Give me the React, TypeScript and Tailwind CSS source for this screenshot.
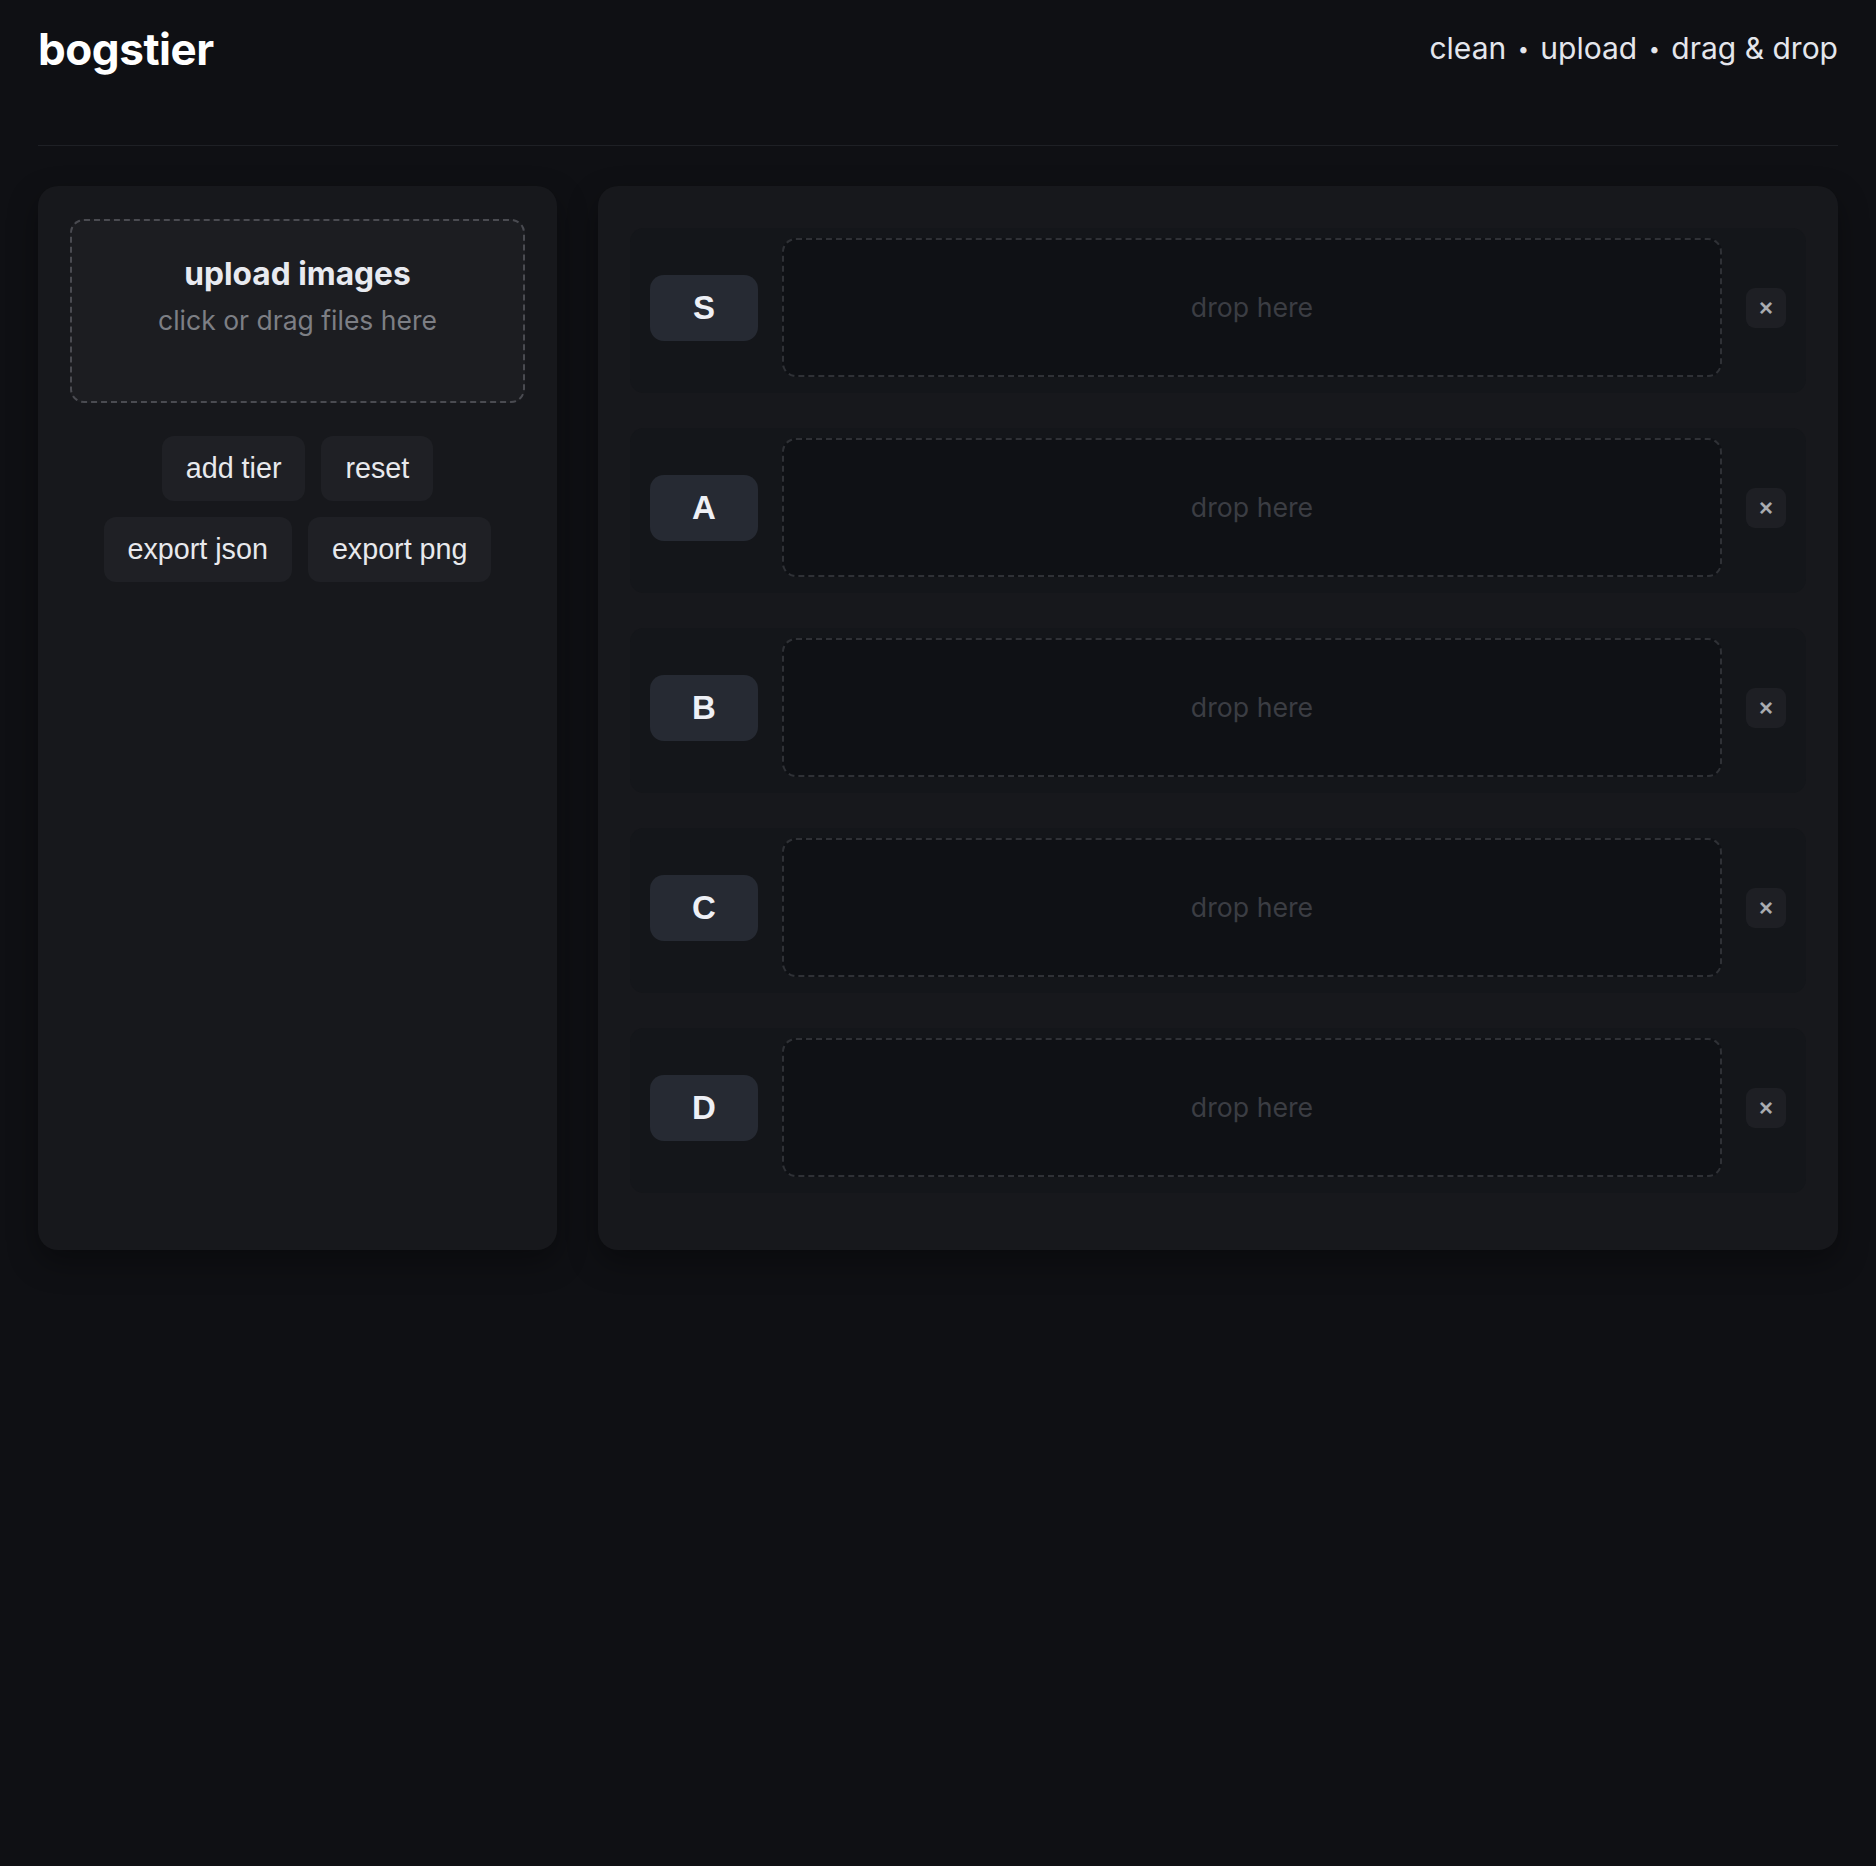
import React from "react";

const tiers = ["S", "A", "B", "C", "D"];

function TierRow({ label }: { label: string }) {
  return (
    <div className="flex items-center gap-[24px] rounded-[14px] bg-[#14161a] pl-[20px] pr-[20px] pt-[10px] pb-[16px]">
      <div
        className="flex h-[66px] w-[108px] shrink-0 items-center justify-center rounded-[14px] bg-[#262a33] text-[33px] font-bold text-[#eef0f6]"
        style={{ fontFamily: '"Liberation Sans", Arial, sans-serif' }}
      >
        {label}
      </div>
      <div className="flex h-[139px] flex-1 items-center justify-center rounded-[14px] border-2 border-dashed border-[#2f3136] bg-[#0f1115]">
        <span className="text-[26.7px] text-[#3b3d43]">drop here</span>
      </div>
      <button
        className="flex h-[40px] w-[40px] shrink-0 items-center justify-center rounded-[9px] bg-[#1e1f24] text-[24px] font-bold text-[#a9abb0]"
        style={{ fontFamily: '"Liberation Sans", Arial, sans-serif' }}
      >
        ×
      </button>
    </div>
  );
}

function ActionButton({ children }: { children: React.ReactNode }) {
  return (
    <button
      className="h-[65px] rounded-[12px] bg-[#1f2025] px-[24px] text-[28.7px] text-[#e8e9ed]"
      style={{ fontFamily: '"Liberation Sans", Arial, sans-serif' }}
    >
      {children}
    </button>
  );
}

function Dot() {
  return <span className="relative -top-[3px] mx-[3px] text-[20px]">•</span>;
}

export default function App() {
  return (
    <div
      className="min-h-[1866px] bg-[#0f1014] px-[38px]"
      style={{ fontFamily: 'Inter, "Noto Sans", sans-serif' }}
    >
      {/* Header */}
      <header className="flex items-center justify-between border-b border-[#1e2025] pt-[28px] pb-[74px]">
        <h1 className="text-[44px] font-bold leading-[43px] tracking-[-0.01em] text-white">
          bogstier
        </h1>
        <p className="text-[30px] leading-[30px] text-[#e4e6ec]">
          clean <Dot /> upload <Dot /> drag &amp; drop
        </p>
      </header>

      <main className="mt-[40px] grid grid-cols-[519px_1fr] gap-[41px]">
        {/* Sidebar */}
        <aside className="rounded-[20px] bg-[#17181c] p-[32px] pt-[33px] shadow-[0_12px_30px_rgba(0,0,0,0.35)]">
          <div className="flex h-[184px] cursor-pointer flex-col items-center rounded-[14px] border-2 border-dashed border-[#4a4b51] bg-[#1c1d21] pt-[35px]">
            <div className="text-[31.7px] font-bold leading-[36px] text-[#e8eaf0]">
              upload images
            </div>
            <div className="mt-[10px] text-[26.5px] leading-[36px] text-[#7d7f85]">
              click or drag files here
            </div>
          </div>

          <div className="mt-[33px] flex flex-wrap justify-center gap-[16px]">
            <ActionButton>add tier</ActionButton>
            <ActionButton>reset</ActionButton>
            <ActionButton>export json</ActionButton>
            <ActionButton>export png</ActionButton>
          </div>
        </aside>

        {/* Tier board */}
        <section className="flex flex-col gap-[35px] rounded-[20px] bg-[#17181c] px-[32px] pt-[42px] pb-[57px] shadow-[0_12px_30px_rgba(0,0,0,0.35)]">
          {tiers.map((t) => (
            <TierRow key={t} label={t} />
          ))}
        </section>
      </main>
    </div>
  );
}
